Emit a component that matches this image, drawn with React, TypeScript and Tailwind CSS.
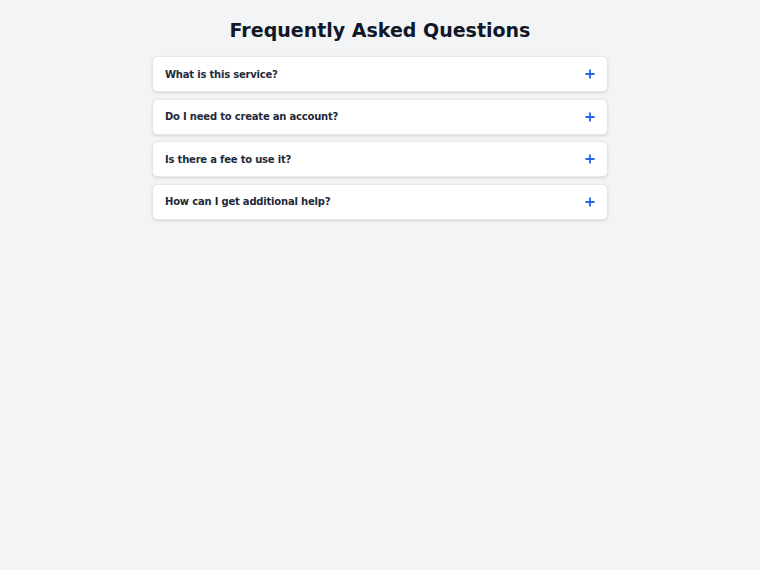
import React, { useState } from "react";

const faqs = [
  { q: "What is this service?", a: "A simple tool that helps you get things done faster." },
  { q: "Do I need to create an account?", a: "No, you can start using it right away without signing up." },
  { q: "Is there a fee to use it?", a: "The basic features are free for everyone." },
  { q: "How can I get additional help?", a: "Reach out to our support team any time." },
];

function PlusIcon() {
  return (
    <svg width="10" height="10" viewBox="0 0 10 10" fill="none">
      <path d="M5 0.5v9M0.5 5h9" stroke="#2563eb" strokeWidth="1.8" />
    </svg>
  );
}

export default function App() {
  const [open, setOpen] = useState<number | null>(null);
  return (
    <div
      className="min-h-screen bg-gray-100 px-4 pt-[16px]"
      style={{ fontFamily: '"DejaVu Sans", sans-serif' }}
    >
      <h1 className="text-center text-[19px] leading-[28px] font-bold text-gray-900 mb-[12px]">
        Frequently Asked Questions
      </h1>
      <div className="mx-auto w-[456px] flex flex-col gap-[6.67px]">
        {faqs.map((f, i) => (
          <div key={f.q} className="bg-white border border-gray-200 rounded-[5px] shadow-sm">
            <button
              className="w-full flex items-center justify-between pl-[12px] pr-[12px] h-[34px] text-left"
              onClick={() => setOpen(open === i ? null : i)}
            >
              <span className="text-[10px] tracking-[-0.2px] font-bold text-gray-800">{f.q}</span>
              <PlusIcon />
            </button>
            {open === i && <div className="px-3 pb-3 text-[10px] text-gray-600">{f.a}</div>}
          </div>
        ))}
      </div>
    </div>
  );
}
